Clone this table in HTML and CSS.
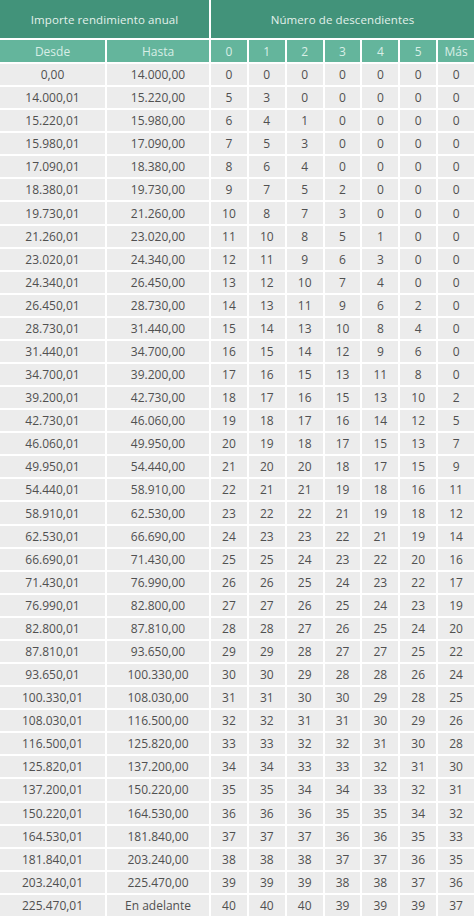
FILE: index.html
```html
<!DOCTYPE html>
<html lang="es">
<head>
<meta charset="utf-8">
<link rel="stylesheet" href="styles.css">
</head>
<body>
<div class="table" id="t">
  <div class="h1 span2">Importe rendimiento anual</div>
  <div class="h1 span7">Número de descendientes</div>
  <div class="h2">Desde</div>
  <div class="h2">Hasta</div>
  <div class="h2">0</div>
  <div class="h2">1</div>
  <div class="h2">2</div>
  <div class="h2">3</div>
  <div class="h2">4</div>
  <div class="h2">5</div>
  <div class="h2">Más</div>
</div>
<script src="app.js"></script>
</body>
</html>
```
FILE: app.js
```js
const rows = [
["0,00","14.000,00",0,0,0,0,0,0,0],
["14.000,01","15.220,00",5,3,0,0,0,0,0],
["15.220,01","15.980,00",6,4,1,0,0,0,0],
["15.980,01","17.090,00",7,5,3,0,0,0,0],
["17.090,01","18.380,00",8,6,4,0,0,0,0],
["18.380,01","19.730,00",9,7,5,2,0,0,0],
["19.730,01","21.260,00",10,8,7,3,0,0,0],
["21.260,01","23.020,00",11,10,8,5,1,0,0],
["23.020,01","24.340,00",12,11,9,6,3,0,0],
["24.340,01","26.450,00",13,12,10,7,4,0,0],
["26.450,01","28.730,00",14,13,11,9,6,2,0],
["28.730,01","31.440,00",15,14,13,10,8,4,0],
["31.440,01","34.700,00",16,15,14,12,9,6,0],
["34.700,01","39.200,00",17,16,15,13,11,8,0],
["39.200,01","42.730,00",18,17,16,15,13,10,2],
["42.730,01","46.060,00",19,18,17,16,14,12,5],
["46.060,01","49.950,00",20,19,18,17,15,13,7],
["49.950,01","54.440,00",21,20,20,18,17,15,9],
["54.440,01","58.910,00",22,21,21,19,18,16,11],
["58.910,01","62.530,00",23,22,22,21,19,18,12],
["62.530,01","66.690,00",24,23,23,22,21,19,14],
["66.690,01","71.430,00",25,25,24,23,22,20,16],
["71.430,01","76.990,00",26,26,25,24,23,22,17],
["76.990,01","82.800,00",27,27,26,25,24,23,19],
["82.800,01","87.810,00",28,28,27,26,25,24,20],
["87.810,01","93.650,00",29,29,28,27,27,25,22],
["93.650,01","100.330,00",30,30,29,28,28,26,24],
["100.330,01","108.030,00",31,31,30,30,29,28,25],
["108.030,01","116.500,00",32,32,31,31,30,29,26],
["116.500,01","125.820,00",33,33,32,32,31,30,28],
["125.820,01","137.200,00",34,34,33,33,32,31,30],
["137.200,01","150.220,00",35,35,34,34,33,32,31],
["150.220,01","164.530,00",36,36,36,35,35,34,32],
["164.530,01","181.840,00",37,37,37,36,36,35,33],
["181.840,01","203.240,00",38,38,38,37,37,36,35],
["203.240,01","225.470,00",39,39,39,38,38,37,36],
["225.470,01","En adelante",40,40,40,39,39,39,37]
];
const t = document.getElementById('t');
for (const r of rows) {
  for (const v of r) {
    const d = document.createElement('div');
    d.className = 'cell';
    d.textContent = v;
    t.appendChild(d);
  }
}
```
FILE: styles.css
```css
html, body {
  margin: 0;
  padding: 0;
  background: #ffffff;
}
body {
  font-family: "Open Sans", "Liberation Sans", sans-serif;
}
.table {
  display: grid;
  grid-template-columns: 105px 102px repeat(7, 1fr);
  grid-template-rows: 38px 22px;
  grid-auto-rows: 21.08px;
  gap: 2px;
  width: 474px;
  background: #ffffff;
}
.table > div {
  display: flex;
  align-items: center;
  justify-content: center;
  white-space: nowrap;
}
.h1 {
  background: #42937a;
  color: #e3f1eb;
  font-size: 11.5px;
  letter-spacing: 0.1px;
}
.span2 { grid-column: span 2; }
.span7 { grid-column: span 7; }
.h2 {
  background: #64b59c;
  color: #d8eee6;
  font-size: 12px;
}
.cell {
  background: #ececec;
  color: #505050;
  font-size: 12px;
}
```
